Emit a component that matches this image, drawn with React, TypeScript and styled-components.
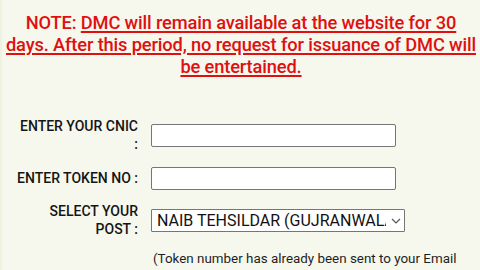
import styled, { createGlobalStyle } from "styled-components"

const GlobalStyle = createGlobalStyle`
    html, body {
        margin: 0;
        padding: 0;
        background-color: #f6f8ee;
    }
    body {
        font-family: Roboto, "Liberation Sans", sans-serif;
    }
`

const PageStyled = styled.div`
    width: 480px;
    height: 270px;
    overflow: hidden;
    box-sizing: border-box;
    border-left: 2px solid #eef3df;
    background-color: #f6f8ee;
`

const NoteStyled = styled.p`
    margin: 0;
    padding-top: 12px;
    text-align: center;
    color: #e01010;
    font-size: 18.3px;
    line-height: 22px;
    font-weight: 500;
    letter-spacing: -0.15px;
    white-space: nowrap;

    & > u {
        text-decoration-thickness: 1.5px;
        text-underline-offset: 2px;
    }
`

const FormTable = styled.table`
    margin-top: 32px;
    border-collapse: collapse;

    & td {
        padding: 0;
        vertical-align: middle;
    }
`

const FormRow = styled.tr<{ $h: number }>`
    height: ${({ $h }) => $h}px;
`

const LabelCell = styled.td`
    width: 136px;
    padding-right: 13px !important;
    text-align: right;
    font-size: 14px;
    line-height: 18px;
    font-weight: 500;
    color: #151515;
    white-space: nowrap;
`

const TextInput = styled.input`
    display: block;
    box-sizing: border-box;
    width: 245px;
    height: 23px;
    margin: 0;
    border: 1px solid #767676;
    border-radius: 2px;
    background-color: #fff;
`

const SelectWrap = styled.div`
    position: relative;
    width: 254px;
    height: 23px;
    box-sizing: border-box;
    border: 1px solid #767676;
    border-radius: 1px;
    background-color: #fff;
`

const SelectStyled = styled.select`
    appearance: none;
    display: block;
    width: 100%;
    height: 100%;
    margin: 0;
    padding: 0 18px 0 5px;
    border: none;
    background: transparent;
    font-family: Roboto, "Liberation Sans", sans-serif;
    font-size: 16px;
    color: #111;
    overflow: hidden;
    white-space: nowrap;
    text-overflow: clip;
    outline: none;
`

const Chevron = styled.svg`
    position: absolute;
    right: 3px;
    top: 8px;
    pointer-events: none;
`

const HelpText = styled.p`
    margin: 6px 0 0 151px;
    font-size: 13.4px;
    line-height: 18px;
    color: #1e1e1e;
    white-space: nowrap;
`

export default function App() {
    return (
        <PageStyled>
            <GlobalStyle />
            <NoteStyled>
                NOTE: <u>DMC will remain available at the website for 30<br />days. After this period, no request for issuance of DMC will<br />be entertained.</u>
            </NoteStyled>
            <FormTable>
                <tbody>
                    <FormRow $h={50}>
                        <LabelCell>ENTER YOUR CNIC<br />:</LabelCell>
                        <td><TextInput type="text" /></td>
                    </FormRow>
                    <FormRow $h={36}>
                        <LabelCell>ENTER TOKEN NO :</LabelCell>
                        <td><TextInput type="text" /></td>
                    </FormRow>
                    <FormRow $h={48}>
                        <LabelCell>SELECT YOUR<br />POST :</LabelCell>
                        <td>
                            <SelectWrap>
                                <SelectStyled defaultValue="gjw">
                                    <option value="gjw">NAIB TEHSILDAR (GUJRANWALA)</option>
                                </SelectStyled>
                                <Chevron width="10" height="6" viewBox="0 0 10 6">
                                    <path d="M1 1 L5 5 L9 1" fill="none" stroke="#555" strokeWidth="1.2" />
                                </Chevron>
                            </SelectWrap>
                        </td>
                    </FormRow>
                </tbody>
            </FormTable>
            <HelpText>(Token number has already been sent to your Email<br />provided in the Application Form)</HelpText>
        </PageStyled>
    )
}
